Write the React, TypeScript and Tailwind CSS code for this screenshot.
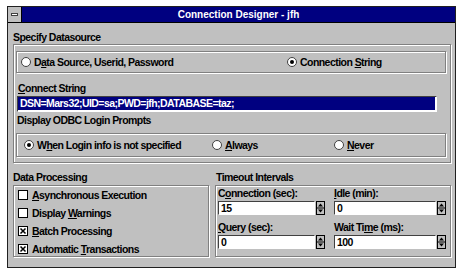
import React from 'react';

const etched = 'border border-[#808080] shadow-[inset_1px_1px_0_#fff,1px_1px_0_#fff]';
const sunken = 'border border-t-[#404040] border-l-[#404040] border-r-white border-b-white bg-white';

function U({ children }: { children: React.ReactNode }) {
  return <span className="underline decoration-1 underline-offset-[1px]">{children}</span>;
}

function Radio({ on, className, children }: { on?: boolean; className?: string; children: React.ReactNode }) {
  return (
    <div className={`flex items-center gap-[3px] ${className ?? ''}`}>
      <svg width="10" height="10" viewBox="0 0 10 10" className="shrink-0">
        <circle cx="5" cy="5" r="4.5" fill="#fff" stroke="#404040" />
        {on && <circle cx="5" cy="5" r="2" fill="#000" />}
      </svg>
      <span>{children}</span>
    </div>
  );
}

function Check({ on, children }: { on?: boolean; children: React.ReactNode }) {
  return (
    <div className="flex h-[14px] items-center gap-[4px]">
      <svg width="10" height="10" viewBox="0 0 10 10" className="shrink-0">
        <rect x="0.5" y="0.5" width="9" height="9" fill="#fff" stroke="#000" />
        {on && <path d="M2.5 2.5 L7.5 7.5 M7.5 2.5 L2.5 7.5" stroke="#000" strokeWidth="1.5" />}
      </svg>
      <span>{children}</span>
    </div>
  );
}

function Spin() {
  return (
    <svg width="9" height="14" viewBox="0 0 9 14" className="shrink-0">
      <rect x="0.5" y="0.5" width="8" height="13" fill="#c0c0c0" stroke="#000" />
      <line x1="0" y1="7" x2="9" y2="7" stroke="#000" />
      <path d="M2 5.5 L4.5 2.5 L7 5.5 Z" fill="#000" />
      <path d="M2 8.5 L4.5 11.5 L7 8.5 Z" fill="#000" />
    </svg>
  );
}

function SpinField({ label, value, editWidth }: { label: React.ReactNode; value: string; editWidth: string }) {
  return (
    <div className="flex flex-col">
      <div className="h-[12px]">{label}</div>
      <div className="mt-[2px] flex gap-[1px]">
        <div className={`h-[14px] ${editWidth} ${sunken} pl-[2px] leading-[12px]`}>{value}</div>
        <Spin />
      </div>
    </div>
  );
}

export default function App() {
  return (
    <div className="h-[274px] w-[464px] bg-white pl-[7px] pt-[6px] font-['Liberation_Sans',Arial,sans-serif] text-[10.5px] font-bold leading-[12px] tracking-[-0.55px] text-black">
      <div className="flex h-[262px] w-[449px] flex-col border border-[#202020] bg-[#c0c0c0]">
        {/* title bar */}
        <div className="flex h-[16px] shrink-0 border-b border-black">
          <div className="flex w-[14px] items-center justify-center border-r border-black bg-[#c0c0c0]">
            <div className="h-[3px] w-[7px] border border-[#404040] bg-white" />
          </div>
          <div className="flex flex-1 items-center justify-center bg-[#000080] text-[10px] tracking-normal text-white">
            Connection Designer - jfh
          </div>
        </div>

        <div className="flex flex-col pl-[5px] pr-[4px] pt-[8px]">
          <div className="h-[12px]">Specify Datasource</div>
          <div className={`mt-[1px] flex h-[119px] flex-col pl-[2px] pr-[4px] ${etched}`}>
            <div className={`mt-[6px] flex h-[22px] items-center pl-[4px] ${etched}`}>
              <Radio className="w-[266px]">
                D<U>a</U>ta Source, Userid, Password
              </Radio>
              <Radio on>
                Connection <U>S</U>tring
              </Radio>
            </div>
            <div className="ml-[2px] mt-[9px] h-[12px]">
              <U>C</U>onnect String
            </div>
            <div className={`ml-[1px] mt-[2px] flex h-[16px] w-[420px] flex-col pb-[1px] pr-[1px] ${sunken}`}>
              <div className="flex-1 bg-[#000080] pl-[2px] leading-[13px] text-white">
                DSN=Mars32;UID=sa;PWD=jfh;DATABASE=taz;
              </div>
            </div>
            <div className="ml-[1px] mt-[2px] h-[12px]">Display ODBC Login Prompts</div>
            <div className={`mt-[7px] flex h-[24px] items-center pl-[7px] ${etched}`}>
              <Radio on className="w-[188px]">
                W<U>h</U>en Login info is not specified
              </Radio>
              <Radio className="w-[122px]">
                <U>A</U>lways
              </Radio>
              <Radio>
                <U>N</U>ever
              </Radio>
            </div>
          </div>

          <div className="mt-[8px] flex gap-[6px]">
            <div className="flex w-[196px] flex-col">
              <div className="h-[12px]">Data Processing</div>
              <div className={`mt-[2px] flex h-[72px] flex-col gap-[4px] pl-[4px] pt-[2px] ${etched}`}>
                <Check>
                  <U>A</U>synchronous Execution
                </Check>
                <Check>
                  Display <U>W</U>arnings
                </Check>
                <Check on>
                  <U>B</U>atch Processing
                </Check>
                <Check on>
                  Automatic <U>T</U>ransactions
                </Check>
              </div>
            </div>
            <div className="flex flex-1 flex-col">
              <div className="ml-[1px] h-[12px]">Timeout Intervals</div>
              <div className={`mt-[2px] grid h-[72px] grid-cols-[107px_112px] content-start gap-x-[9px] gap-y-[6px] pl-[2px] pt-[1px] ${etched}`}>
                <SpinField
                  label={
                    <>
                      C<U>o</U>nnection (sec):
                    </>
                  }
                  value="15"
                  editWidth="w-[97px]"
                />
                <SpinField
                  label={
                    <>
                      <U>I</U>dle (min):
                    </>
                  }
                  value="0"
                  editWidth="w-[102px]"
                />
                <SpinField
                  label={
                    <>
                      <U>Q</U>uery (sec):
                    </>
                  }
                  value="0"
                  editWidth="w-[97px]"
                />
                <SpinField
                  label={
                    <>
                      Wait Ti<U>m</U>e (ms):
                    </>
                  }
                  value="100"
                  editWidth="w-[102px]"
                />
              </div>
            </div>
          </div>
        </div>
      </div>
    </div>
  );
}
